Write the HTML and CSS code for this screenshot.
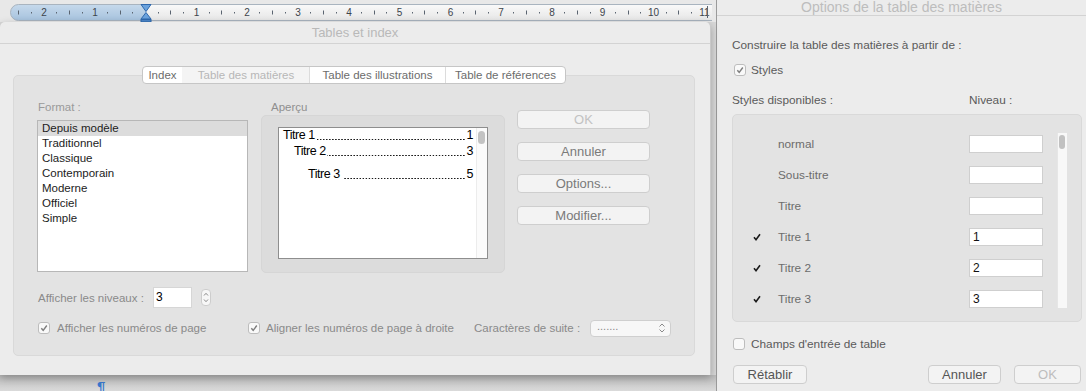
FILE: index.html
```html
<!DOCTYPE html>
<html lang="fr">
<head>
<meta charset="utf-8">
<title>Tables et index</title>
<link rel="stylesheet" href="styles.css">
</head>
<body>
<div class="screen">
  <div class="left">
    <div class="rulerbar">
      <svg width="712" height="22" viewBox="0 0 712 22">
        <defs>
          <clipPath id="pill"><rect x="10.5" y="4.5" width="730" height="16" rx="8"/></clipPath>
          <linearGradient id="gb" x1="0" y1="0" x2="0" y2="1"><stop offset="0" stop-color="#cfe0f0"/><stop offset="1" stop-color="#a3c0dc"/></linearGradient>
          <linearGradient id="gw" x1="0" y1="0" x2="0" y2="1"><stop offset="0" stop-color="#ffffff"/><stop offset="1" stop-color="#e4e4e4"/></linearGradient>
        </defs>
        <g clip-path="url(#pill)">
          <rect x="0" y="0" width="146" height="22" fill="url(#gb)"/>
          <rect x="146" y="0" width="600" height="22" fill="url(#gw)"/>
        </g>
        <rect x="10.5" y="4.5" width="730" height="16" rx="8" fill="none" stroke="#a9b4bf"/>
        <path fill="#5a6470" d="M31 12h1v1.5h-1zM56 12h1v1.5h-1zM82 12h1v1.5h-1zM107 12h1v1.5h-1zM132 12h1v1.5h-1zM158 12h1v1.5h-1zM183 12h1v1.5h-1zM209 12h1v1.5h-1zM234 12h1v1.5h-1zM259 12h1v1.5h-1zM285 12h1v1.5h-1zM310 12h1v1.5h-1zM336 12h1v1.5h-1zM361 12h1v1.5h-1zM386 12h1v1.5h-1zM412 12h1v1.5h-1zM437 12h1v1.5h-1zM463 12h1v1.5h-1zM488 12h1v1.5h-1zM513 12h1v1.5h-1zM539 12h1v1.5h-1zM564 12h1v1.5h-1zM590 12h1v1.5h-1zM615 12h1v1.5h-1zM640 12h1v1.5h-1zM666 12h1v1.5h-1zM691 12h1v1.5h-1z"/>
        <path fill="#5a6470" d="M18 10.5h1v4h-1zM69 10.5h1v4h-1zM120 10.5h1v4h-1zM170 10.5h1v4h-1zM221 10.5h1v4h-1zM272 10.5h1v4h-1zM323 10.5h1v4h-1zM374 10.5h1v4h-1zM424 10.5h1v4h-1zM475 10.5h1v4h-1zM526 10.5h1v4h-1zM577 10.5h1v4h-1zM628 10.5h1v4h-1zM678 10.5h1v4h-1z"/>
        <g class="rnum" text-anchor="middle">
          <text x="44" y="16">2</text><text x="95" y="16">1</text>
          <text x="196.5" y="16">1</text><text x="247" y="16">2</text><text x="298" y="16">3</text>
          <text x="349" y="16">4</text><text x="399.5" y="16">5</text><text x="450.5" y="16">6</text>
          <text x="501" y="16">7</text><text x="552" y="16">8</text><text x="602.5" y="16">9</text>
          <text x="653.5" y="16">10</text><text x="704.5" y="16">11</text>
        </g>
        <path d="M707.5 6v12" stroke="#5a6470" stroke-width="1"/>
        <path d="M141 4.5h10l-5 7z" fill="#6aa2dd" stroke="#2f68ad" stroke-width="1" stroke-linejoin="round"/>
        <path d="M146 12.5l5 6.5h-10z" fill="#6aa2dd" stroke="#2f68ad" stroke-width="1" stroke-linejoin="round"/>
        <rect x="141" y="19.5" width="10" height="2.5" fill="#4b86c8" stroke="#2f68ad" stroke-width="1"/>
      </svg>
    </div>
    <div class="dialog">
      <div class="titlebar">Tables et index</div>
      <div class="dbody">
        <div class="group">
          <div class="tabsrow">
            <div class="tabs">
              <div class="tab t1">Index</div>
              <div class="tab t2 sel">Table des matières</div>
              <div class="tab t3">Table des illustrations</div>
              <div class="tab t4">Table de références</div>
            </div>
          </div>
          <div class="content">
            <div class="fcol">
              <div class="lbl">Format :</div>
              <div class="listbox">
                <div class="li on">Depuis modèle</div>
                <div class="li">Traditionnel</div>
                <div class="li">Classique</div>
                <div class="li">Contemporain</div>
                <div class="li">Moderne</div>
                <div class="li">Officiel</div>
                <div class="li">Simple</div>
              </div>
            </div>
            <div class="acol">
              <div class="lbl alb">Aperçu</div>
              <div class="pbox">
                <div class="preview">
                  <div class="plines">
                    <div class="pl l1"><span>Titre 1</span><span class="dots"></span><span>1</span></div>
                    <div class="pl l2"><span>Titre 2</span><span class="dots"></span><span>3</span></div>
                    <div class="pl l3"><span>Titre 3</span><span class="dots gap"></span><span>5</span></div>
                  </div>
                  <div class="pscroll"><div class="pthumb"></div></div>
                </div>
              </div>
            </div>
            <div class="bcol">
              <div class="btn dis">OK</div>
              <div class="btn">Annuler</div>
              <div class="btn">Options...</div>
              <div class="btn">Modifier...</div>
            </div>
          </div>
          <div class="levels">
            <span class="lvlabel">Afficher les niveaux :</span>
            <div class="num">3</div>
            <div class="stepper">
              <svg width="10" height="17" viewBox="0 0 10 17"><path d="M3 6.5l2-2.2 2 2.2M3 10.5l2 2.2 2-2.2" fill="none" stroke="#8a8a8a" stroke-width="1"/></svg>
            </div>
          </div>
          <div class="checks">
            <div class="ci c1">
              <span class="cb on"><svg width="10" height="10" viewBox="0 0 10 10"><path d="M2.3 5.2l1.9 2.1 3.6-4.8" fill="none" stroke="#7e7e7e" stroke-width="1.4"/></svg></span>
              <span class="clab">Afficher les numéros de page</span>
            </div>
            <div class="ci c2">
              <span class="cb on"><svg width="10" height="10" viewBox="0 0 10 10"><path d="M2.3 5.2l1.9 2.1 3.6-4.8" fill="none" stroke="#7e7e7e" stroke-width="1.4"/></svg></span>
              <span class="clab c2lab">Aligner les numéros de page à droite</span>
            </div>
            <div class="ci c3">Caractères de suite :</div>
            <div class="select">
              <span>.......</span>
              <svg width="8" height="12" viewBox="0 0 8 12"><path d="M1.5 4.5l2.5-2.5 2.5 2.5M1.5 7.5l2.5 2.5 2.5-2.5" fill="none" stroke="#8a8a8a" stroke-width="1"/></svg>
            </div>
          </div>
        </div>
      </div>
    </div>
    <div class="docbottom"><span class="pilcrow">¶</span></div>
  </div>
  <div class="panel">
    <div class="ptitle">Options de la table des matières</div>
    <div class="pbody">
      <div class="ptext">Construire la table des matières à partir de :</div>
      <div class="prow styles">
        <span class="cb on"><svg width="10" height="10" viewBox="0 0 10 10"><path d="M2.3 5.2l1.9 2.1 3.6-4.8" fill="none" stroke="#7e7e7e" stroke-width="1.4"/></svg></span>
        <span class="plab">Styles</span>
      </div>
      <div class="hdr"><span class="hd1">Styles disponibles :</span><span>Niveau :</span></div>
      <div class="sgroup">
        <div class="srows">
          <div class="srow"><span class="ck"></span><span class="nm">normal</span><span class="in"></span></div>
          <div class="srow"><span class="ck"></span><span class="nm">Sous-titre</span><span class="in"></span></div>
          <div class="srow"><span class="ck"></span><span class="nm">Titre</span><span class="in"></span></div>
          <div class="srow"><span class="ck"><svg width="8" height="8" viewBox="0 0 8 8"><path d="M1 4.3l2 2.4 4-5.5" fill="none" stroke="#1a1a1a" stroke-width="1.6"/></svg></span><span class="nm">Titre 1</span><span class="in">1</span></div>
          <div class="srow"><span class="ck"><svg width="8" height="8" viewBox="0 0 8 8"><path d="M1 4.3l2 2.4 4-5.5" fill="none" stroke="#1a1a1a" stroke-width="1.6"/></svg></span><span class="nm">Titre 2</span><span class="in">2</span></div>
          <div class="srow"><span class="ck"><svg width="8" height="8" viewBox="0 0 8 8"><path d="M1 4.3l2 2.4 4-5.5" fill="none" stroke="#1a1a1a" stroke-width="1.6"/></svg></span><span class="nm">Titre 3</span><span class="in">3</span></div>
        </div>
        <div class="sscroll"><div class="sthumb"></div></div>
      </div>
      <div class="prow champs">
        <span class="cb"></span>
        <span class="plab">Champs d'entrée de table</span>
      </div>
      <div class="pbtns">
        <div class="btn pb rb">Rétablir</div>
        <div class="spacer"></div>
        <div class="btn pb ab">Annuler</div>
        <div class="btn pb okb dis">OK</div>
      </div>
    </div>
  </div>
</div>
</body>
</html>
```
FILE: styles.css
```css
* { box-sizing: border-box; margin: 0; padding: 0; }
html, body { width: 1086px; height: 391px; overflow: hidden; }
body {
  font-family: "Liberation Sans", Arial, sans-serif;
  font-size: 11.5px;
  background: #d6d6d6;
  color: #222;
}
.screen { display: flex; width: 1086px; height: 391px; }

/* ---------- left side ---------- */
.left { width: 716px; flex: none; display: flex; flex-direction: column; background: #d8d8d8; }
.rulerbar { height: 22px; background: #e8e8e8; }
.rulerbar svg { display: block; }
.rnum text { font-family: "Liberation Sans", Arial, sans-serif; font-size: 10px; fill: #3c444c; }

.dialog {
  width: 711px; height: 353px; flex: none;
  background: #ececec;
  border-radius: 5px 5px 0 0;
  border-right: 1px solid #c9c9c9;
  box-shadow: 0 3px 8px rgba(0,0,0,0.28);
  display: flex; flex-direction: column;
  position: relative; z-index: 1;
}
.titlebar {
  height: 22px; flex: none;
  border-bottom: 1px solid #d3d3d3;
  text-align: center; line-height: 21px;
  font-size: 13px; color: #b9b9b9;
}
.dbody { flex: 1; padding: 31px 15px 19px 13px; }
.group {
  height: 281px;
  border: 1px solid #d9d9d9;
  border-radius: 5px;
  background: #e3e3e3;
  padding-left: 23px;
}
.tabsrow { display: flex; justify-content: center; margin: -10px 0 0 -23px; }
.tabs {
  display: flex; height: 18px;
  border: 1px solid #c6c6c6; border-radius: 4px;
  background: #fff; overflow: hidden;
}
.tab { text-align: center; line-height: 16px; color: #6c6c6c; border-left: 1px solid #dcdcdc; }
.tab.t1 { width: 39px; border-left: none; }
.tab.t2 { width: 127px; }
.tab.t3 { width: 136px; }
.tab.t4 { width: 120px; }
.tab.sel { background: #f4f4f4; color: #b7b7b7; border-left-color: #f4f4f4; }

.content { display: flex; margin-top: 16px; align-items: flex-start; }
.lbl { line-height: 14px; color: #9a9a9a; padding-left: 1px; }
.fcol { width: 211px; flex: none; }
.listbox {
  margin-top: 6px; height: 152px;
  background: #fff; border: 1px solid #b7b7b7;
}
.li { line-height: 15px; padding-left: 4px; color: #1c1c1c; }
.li.on { background: #dcdcdc; }

.acol { width: 244px; flex: none; margin-left: 13px; }
.alb { padding-left: 10px; color: #8f8f8f; }
.pbox {
  margin-top: 1px; height: 158px;
  background: #dcdcdc; border: 1px solid #d6d6d6; border-radius: 5px;
  padding: 11px 0 0 16px;
}
.preview {
  width: 210px; height: 132px;
  background: #fff; border: 1px solid #8e8e8e;
  display: flex;
}
.plines { flex: 1; padding: 0 3px 0 4px; min-width: 0; }
.pl { display: flex; line-height: 14px; height: 14px; font-size: 12.5px; letter-spacing: -0.45px; color: #000; white-space: nowrap; }
.pl .dots {
  flex: 1; min-width: 0; margin: 0 0.5px 0 1px;
  background-image: linear-gradient(90deg, #1a1a1a 1.2px, transparent 1.2px);
  background-size: 3.05px 1.3px;
  background-repeat: repeat-x;
  background-position: right 0 top 10.6px;
}
.pl .dots.gap { margin-left: 4px; }
.pl.l2 { padding-left: 11px; margin-top: 2px; }
.pl.l3 { padding-left: 25px; margin-top: 9px; }
.pscroll { width: 11px; flex: none; border-left: 1px solid #ececec; background: #fbfbfb; }
.pthumb { width: 7px; height: 13px; margin: 3px 0 0 1px; background: #c3c3c3; border-radius: 4px; }

.bcol { margin: 10px 0 0 12px; width: 133px; flex: none; display: flex; flex-direction: column; gap: 13px; }
.btn {
  height: 19px;
  border: 1px solid #cecece; border-radius: 4px;
  background: #f3f3f3;
  color: #7a7a7a; font-size: 13px; line-height: 17px; text-align: center;
}
.btn.dis { color: #c2c2c2; }

.levels { display: flex; align-items: center; margin-top: 14px; height: 21px; }
.lvlabel { width: 116px; flex: none; color: #8a8a8a; padding-left: 1px; }
.num {
  width: 39px; height: 21px;
  background: #fff; border: 1px solid #d6d6d6;
  font-size: 12px; line-height: 19px; padding-left: 2px; color: #000;
}
.stepper {
  margin-left: 9px; width: 10px; height: 17px;
  border: 1px solid #cdcdcd; border-radius: 4px; background: #f7f7f7;
}
.stepper svg { display: block; margin: -1px 0 0 -1px; }

.checks { display: flex; align-items: center; margin-top: 13px; height: 14px; }
.ci { display: flex; align-items: center; flex: none; color: #8a8a8a; }
.ci.c1 { width: 211px; padding-left: 1px; }
.ci.c2 { width: 226px; }
.ci.c3 { width: 116px; }
.cb {
  width: 12px; height: 12px; flex: none;
  border: 1px solid #bdbdbd; border-radius: 3px; background: #f9f9f9;
  display: flex; align-items: center; justify-content: center;
}
.clab { margin-left: 7px; }
.c2lab { margin-left: 6px; }
.select {
  width: 81px; height: 17px;
  border: 1px solid #cfcfcf; border-radius: 4px; background: #f7f7f7;
  display: flex; align-items: center; justify-content: space-between;
  padding: 0 4px 0 6px; color: #8a8a8a; font-size: 11px;
}
.select span { line-height: 13px; padding-bottom: 3px; }

.docbottom {
  flex: 1;
  background: linear-gradient(#bcbcbc, #dadada);
  padding: 4px 0 0 97px;
  overflow: hidden;
}
.pilcrow { font-size: 15px; font-weight: bold; color: #3b78cf; line-height: 16px; }

/* ---------- right panel ---------- */
.panel {
  width: 370px; flex: none;
  border-left: 1px solid #9a9a9a;
  background: #ececec;
  display: flex; flex-direction: column;
}
.ptitle {
  height: 16px; flex: none;
  border-bottom: 1px solid #d3d3d3;
  text-align: center; line-height: 15px;
  font-size: 14px; color: #bdbdbd;
}
.pbody { padding: 22px 4px 0 15px; font-size: 11.8px; color: #5a5a5a; }
.ptext { line-height: 14px; }
.prow { display: flex; align-items: center; height: 12px; }
.prow.styles { margin-top: 12px; padding-left: 2px; }
.plab { margin-left: 5px; }
.hdr { display: flex; margin-top: 17px; line-height: 14px; }
.hd1 { width: 237px; flex: none; }
.sgroup {
  margin-top: 7px; height: 208px;
  border: 1px solid #d9d9d9; border-radius: 5px; background: #e3e3e3;
  display: flex; padding: 13px 0 0 20px;
}
.srows { width: 290px; flex: none; }
.srow { display: flex; align-items: center; height: 31px; }
.ck { width: 25px; flex: none; display: flex; align-items: center; }
.ck svg { display: block; }
.nm { width: 191px; flex: none; color: #6c6c6c; }
.in {
  width: 74px; height: 18px; flex: none;
  background: #fff; border: 1px solid #cfcfcf;
  padding-left: 3px; font-size: 12px; line-height: 16px; color: #111;
}
.sscroll {
  margin: 5px 0 0 14px; width: 10px; height: 175px;
  background: #f8f8f8; border-left: 1px solid #e6e6e6;
}
.sthumb { width: 6px; height: 14px; margin: 2px 0 0 1px; background: #c1c1c1; border-radius: 3px; }
.prow.champs { margin-top: 16px; padding-left: 1px; }
.prow.champs .plab { margin-left: 6px; }
.pbtns { display: flex; margin-top: 15px; }
.btn.pb { color: #555; }
.btn.pb.dis { color: #bdbdbd; }
.rb { width: 74px; margin-left: 1px; }
.ab { width: 73px; }
.okb { width: 67px; margin-left: 13px; margin-right: 1px; }
.spacer { flex: 1; }
```
